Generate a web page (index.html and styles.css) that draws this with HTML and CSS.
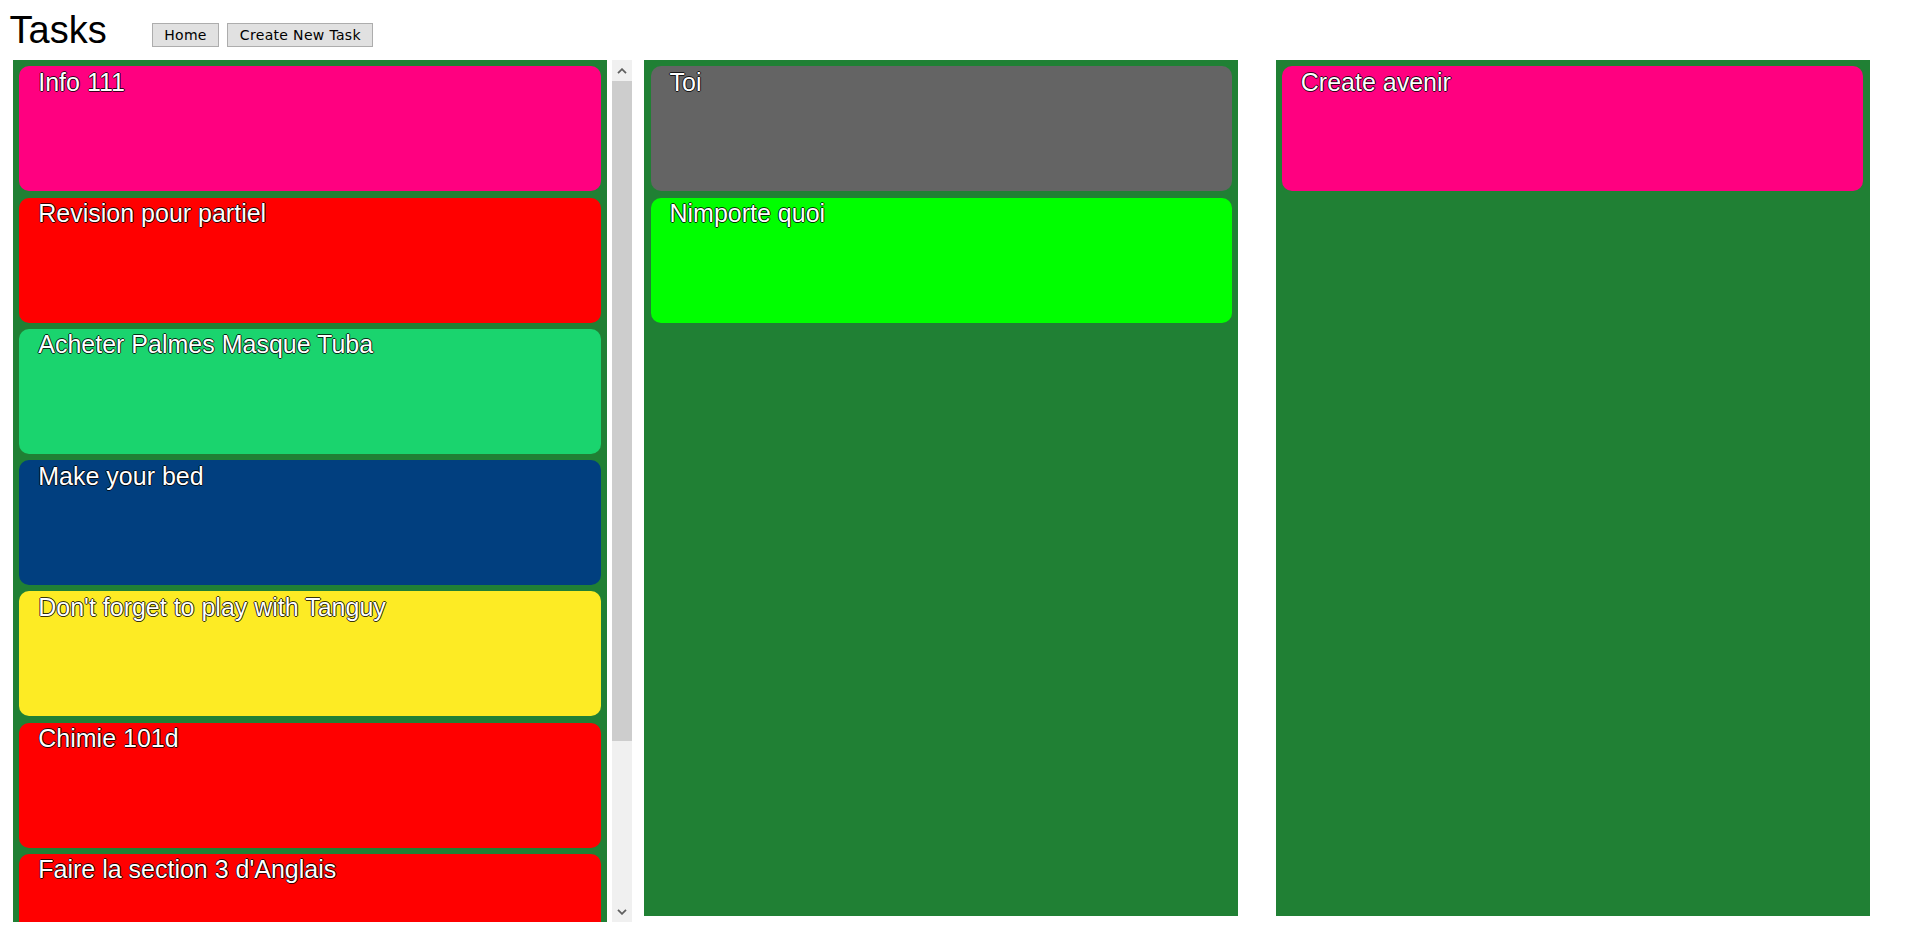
FILE: index.html
```html
<!DOCTYPE html>
<html lang="en">
<head>
<meta charset="utf-8">
<title>Tasks</title>
<link rel="stylesheet" href="styles.css">
</head>
<body>
<header class="topbar">
  <h1 class="title">Tasks</h1>
  <nav class="nav">
    <button class="btn">Home</button>
    <button class="btn">Create New Task</button>
  </nav>
</header>
<main class="board">
  <section class="column">
    <div class="scroll-frame">
      <div class="list list--scroll">
        <div class="card card--pink">Info 111</div>
        <div class="card card--red">Revision pour partiel</div>
        <div class="card card--mint">Acheter Palmes Masque Tuba</div>
        <div class="card card--navy">Make your bed</div>
        <div class="card card--yellow">Don't forget to play with Tanguy</div>
        <div class="card card--red">Chimie 101d</div>
        <div class="card card--red">Faire la section 3 d'Anglais</div>
      </div>
      <div class="scrollbar">
        <div class="sb-btn"><svg width="10" height="6" viewBox="0 0 10 6"><polyline points="1,5.2 5,1.2 9,5.2" fill="none" stroke="#606060" stroke-width="1.8"/></svg></div>
        <div class="sb-thumb"></div>
        <div class="sb-track"></div>
        <div class="sb-btn"><svg width="10" height="6" viewBox="0 0 10 6"><polyline points="1,0.8 5,4.8 9,0.8" fill="none" stroke="#606060" stroke-width="1.8"/></svg></div>
      </div>
    </div>
  </section>
  <section class="column">
    <div class="list">
      <div class="card card--gray">Toi</div>
      <div class="card card--lime">Nimporte quoi</div>
    </div>
  </section>
  <section class="column">
    <div class="list">
      <div class="card card--pink">Create avenir</div>
    </div>
  </section>
</main>
</body>
</html>
```
FILE: styles.css
```css
html, body {
  margin: 0;
  padding: 0;
  background: #ffffff;
}

body {
  font-family: "Liberation Sans", Arial, sans-serif;
  color: #000000;
}

.topbar {
  display: flex;
  align-items: flex-start;
  height: 60px;
  padding-left: 9.5px;
  box-sizing: border-box;
}

.title {
  margin: 9px 0 0;
  font-size: 38px;
  font-weight: normal;
  line-height: normal;
}

.nav {
  display: flex;
  gap: 8px;
  margin: 23px 0 0 45px;
}

.btn {
  height: 24px;
  padding: 0 11.5px;
  margin: 0;
  font-family: "DejaVu Sans", sans-serif;
  font-size: 14px;
  letter-spacing: 0.33px;
  line-height: 22px;
  color: #000000;
  background: #e1e1e1;
  border: 1px solid #adadad;
  border-radius: 0;
}

.board {
  display: flex;
  padding-left: 13px;
}

.column {
  flex: none;
  width: 631.25px;
}

.scroll-frame {
  display: flex;
  gap: 5px;
  height: 862px;
}

.list {
  flex: none;
  width: 594px;
  height: 856px;
  box-sizing: border-box;
  padding: 6.25px;
  background: #208034;
  display: flex;
  flex-direction: column;
  gap: 6.25px;
}

.list--scroll {
  height: 862px;
  overflow: hidden;
}

.card {
  flex: none;
  height: 125px;
  box-sizing: border-box;
  padding: 1.5px 20px 0 19px;
  border-radius: 10px;
  color: #ffffff;
  font-size: 25px;
  line-height: normal;
  text-shadow: -1px 0 0 rgba(0,0,0,0.8), 1px 0 0 rgba(0,0,0,0.8), 0 -1px 0 rgba(0,0,0,0.8), 0 1px 0 rgba(0,0,0,0.8);
}

.card--pink { background: #ff0080; }
.card--red { background: #ff0000; }
.card--mint { background: #1ad46e; }
.card--navy { background: #013f7f; }
.card--yellow { background: #fdeb24; }
.card--gray { background: #646464; }
.card--lime { background: #00ff00; }

.scrollbar {
  flex: none;
  width: 20px;
  background: #f0f0f0;
  display: flex;
  flex-direction: column;
}

.sb-btn {
  flex: none;
  height: 21px;
  display: flex;
  align-items: center;
  justify-content: center;
}

.sb-btn svg {
  display: block;
}

.sb-thumb {
  flex: none;
  height: 660px;
  background: #cdcdcd;
}

.sb-track {
  flex: 1;
}
```
